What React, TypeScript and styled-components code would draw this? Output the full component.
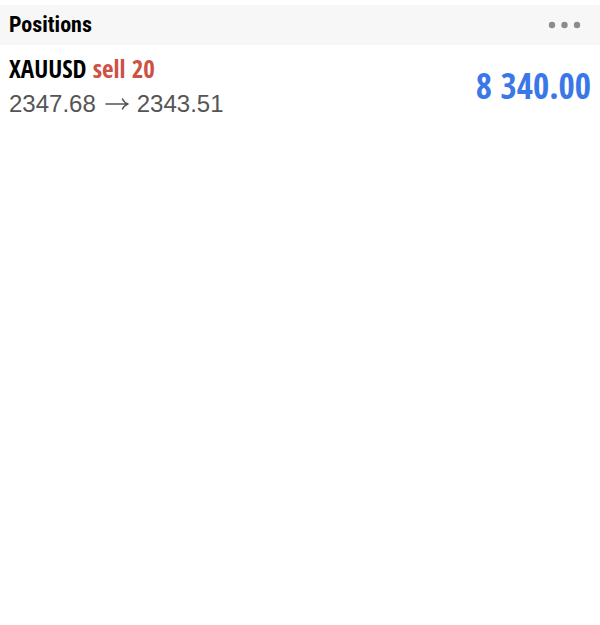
import React from "react";
import styled, { createGlobalStyle } from "styled-components";

const Global = createGlobalStyle`
  *, *::before, *::after { box-sizing: border-box; }
  body { margin: 0; background: #fff; color: #000; font-family: "Open Sans Condensed", "Open Sans", sans-serif; }
`;

const Page = styled.main`
  min-height: 100vh;
  padding-top: 5px;
  background: #fff;
`;

const Header = styled.header`
  display: flex;
  align-items: center;
  justify-content: space-between;
  height: 40px;
  padding: 0 19px 0 9px;
  background: #f7f7f7;
`;

const Title = styled.h1`
  margin: 0;
  font-family: "Roboto Condensed", Roboto, sans-serif;
  font-size: 22px;
  line-height: 32px;
  font-weight: 700;
`;

const MenuButton = styled.button`
  display: flex;
  padding: 12px 0;
  border: 0;
  background: none;
  color: #8c8c8c;
  cursor: pointer;
`;

const List = styled.ul`
  margin: 0;
  padding: 0;
  list-style: none;
`;

const Row = styled.li`
  display: flex;
  align-items: center;
  justify-content: space-between;
  padding: 6px 9px;
`;

const Order = styled.div`
  font-size: 25px;
  line-height: 34px;
  font-weight: 600;
`;

const Side = styled.span`
  color: #cf5044;
`;

const Prices = styled.div`
  display: flex;
  align-items: center;
  gap: 8px;
  font-family: "Liberation Sans", sans-serif;
  font-size: 24px;
  line-height: 38px;
  color: #555;
`;

const Profit = styled.div`
  padding-bottom: 2px;
  font-size: 35px;
  line-height: 40px;
  font-weight: 600;
  color: #3b78e7;
`;

const positions = [
  { symbol: "XAUUSD", side: "sell", volume: 20, open: "2347.68", current: "2343.51", profit: "8 340.00" },
];

export default function App() {
  return (
    <>
      <Global />
      <Page>
        <Header>
          <Title>Positions</Title>
          <MenuButton aria-label="Position options">
            <svg width="33" height="8" viewBox="0 0 33 8" fill="currentColor">
              <circle cx="4" cy="4" r="3.200" />
              <circle cx="16.500" cy="4" r="3.200" />
              <circle cx="29" cy="4" r="3.200" />
            </svg>
          </MenuButton>
        </Header>
        <List>
          {positions.map((p) => (
            <Row key={p.symbol}>
              <div>
                <Order>
                  {p.symbol} <Side>{p.side} {p.volume}</Side>
                </Order>
                <Prices>
                  <span>{p.open}</span>
                  <svg width="25" height="14" viewBox="0 0 25 14" fill="none" stroke="currentColor" strokeWidth="1.5" strokeLinecap="round" strokeLinejoin="round">
                    <path d="M2 7H24M18.500 2Q20 5.500 24 7Q20 8.500 18.500 12" />
                  </svg>
                  <span>{p.current}</span>
                </Prices>
              </div>
              <Profit>{p.profit}</Profit>
            </Row>
          ))}
        </List>
      </Page>
    </>
  );
}
